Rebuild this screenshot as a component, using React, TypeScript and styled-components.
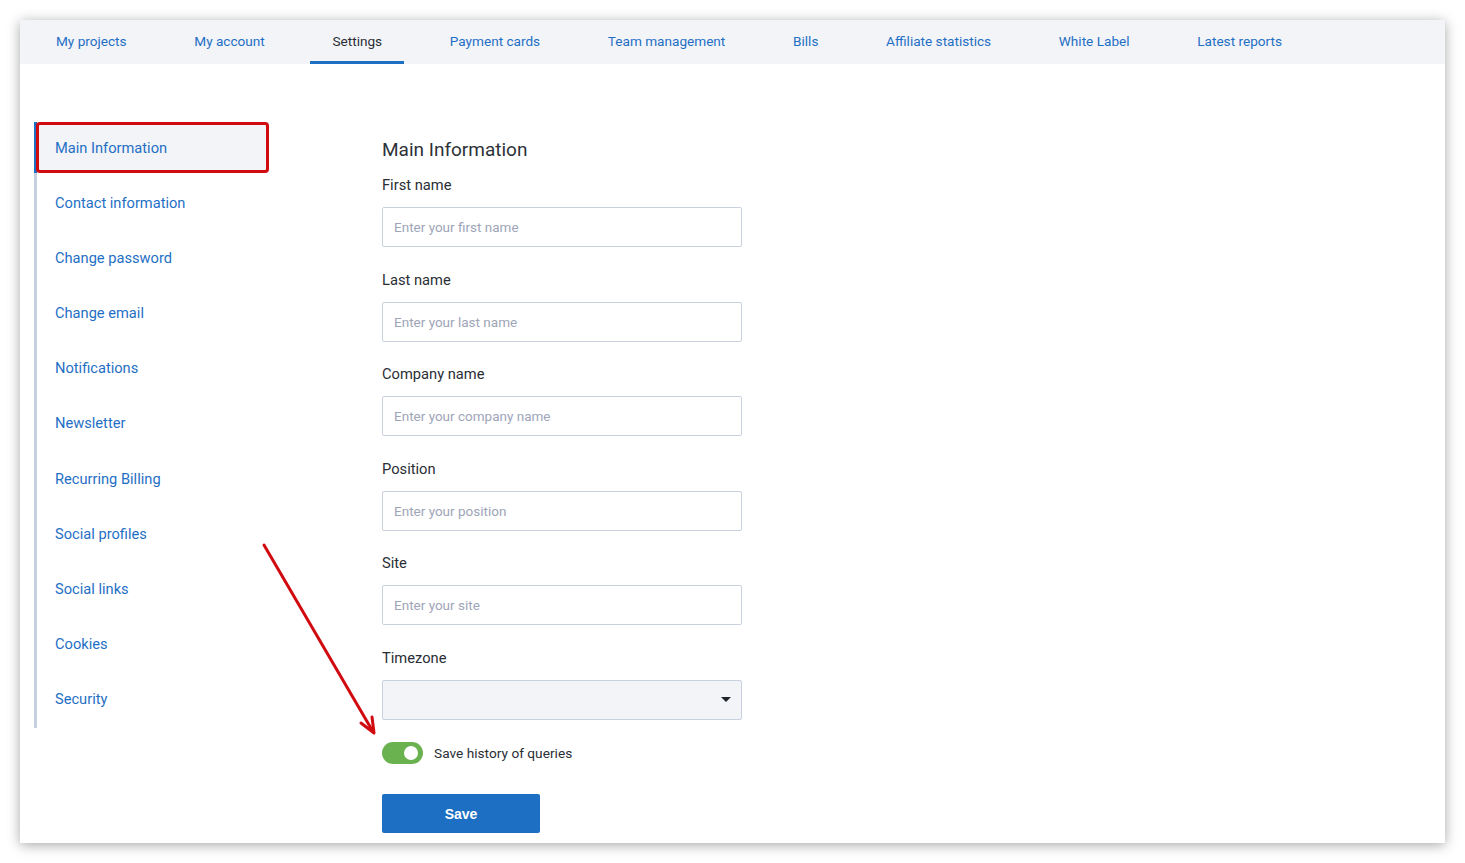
import React, { useState } from "react";
import styled, { createGlobalStyle } from "styled-components";

const GlobalStyle = createGlobalStyle`
  * { box-sizing: border-box; }
  body {
    margin: 0;
    background: #ffffff;
    font-family: Roboto, "Liberation Sans", Arial, sans-serif;
  }
`;

const Page = styled.div`
  padding: 20px;
  height: 863px;
`;

const Card = styled.div`
  position: relative;
  height: 823px;
  background: #ffffff;
  box-shadow: 0 2px 12px rgba(0, 0, 0, 0.35);
`;

const TabBar = styled.nav`
  display: flex;
  gap: 23.7px;
  height: 44px;
  padding-left: 14px;
  background: #f3f4f8;
`;

const Tab = styled.a<{ $active?: boolean }>`
  display: flex;
  align-items: center;
  padding: 1px 22px 0;
  font-size: 13.6px;
  color: ${(p) => (p.$active ? "#2a2e35" : "#1f6fc5")};
  border-bottom: 3px solid ${(p) => (p.$active ? "#1c6fc2" : "transparent")};
  cursor: pointer;
`;

const Content = styled.div`
  display: flex;
  padding-left: 14px;
`;

const SideMenu = styled.ul`
  list-style: none;
  margin: 58px 0 0;
  padding: 0 0 3px;
  width: 235px;
  border-left: 3px solid #c6d0de;
  display: flex;
  flex-direction: column;
  gap: 4.2px;
  align-self: flex-start;
`;

const SideItem = styled.li<{ $active?: boolean }>`
  position: relative;
  height: 51px;
  display: flex;
  align-items: center;
  padding-left: 18px;
  margin-left: -3px;
  border-left: 3px solid ${(p) => (p.$active ? "#1c6fc2" : "transparent")};
  background: ${(p) => (p.$active ? "#f3f4f8" : "transparent")};
  font-size: 14.65px;
  color: #1f6fc5;
  cursor: pointer;

  ${(p) =>
    p.$active &&
    `
    &::after {
      content: "";
      position: absolute;
      left: -1px;
      top: 0;
      right: 0;
      bottom: 0;
      border: 3px solid #d10a10;
      border-radius: 4px;
    }
  `}
`;

const Form = styled.form`
  width: 360px;
  margin: 74px 0 0 113px;
  display: flex;
  flex-direction: column;
`;

const Title = styled.h2`
  margin: 0 0 13px;
  font-size: 19px;
  line-height: 24px;
  font-weight: 400;
  color: #2d3138;
`;

const Field = styled.div`
  display: flex;
  flex-direction: column;
  margin-bottom: 22.5px;
`;

const Label = styled.label`
  font-size: 14.7px;
  line-height: 20px;
  color: #2a2e35;
  margin-bottom: 12px;
`;

const TextInput = styled.input`
  height: 40px;
  width: 100%;
  padding: 0 11px;
  border: 1px solid #c9d1de;
  border-radius: 2px;
  font-family: inherit;
  font-size: 13.5px;
  color: #2a2e35;
  background: #ffffff;
  outline: none;

  &::placeholder {
    color: #9ea5b8;
  }
`;

const SelectBox = styled.div`
  position: relative;
  height: 40px;
  border: 1px solid #c9d1de;
  border-radius: 2px;
  background: #f3f4f8;
`;

const Caret = styled.span`
  position: absolute;
  right: 10px;
  top: 16px;
  width: 0;
  height: 0;
  border-left: 5px solid transparent;
  border-right: 5px solid transparent;
  border-top: 5px solid #1f232a;
`;

const ToggleRow = styled.div`
  display: flex;
  align-items: center;
  gap: 11px;
  height: 22px;
`;

const Toggle = styled.button<{ $on: boolean }>`
  position: relative;
  width: 41px;
  height: 22px;
  border: none;
  padding: 0;
  border-radius: 11px;
  background: ${(p) => (p.$on ? "#6ab150" : "#c6ccd6")};
  cursor: pointer;

  &::after {
    content: "";
    position: absolute;
    top: 4px;
    left: ${(p) => (p.$on ? "22px" : "5px")};
    width: 14px;
    height: 14px;
    border-radius: 50%;
    background: #ffffff;
  }
`;

const ToggleText = styled.span`
  font-size: 13.7px;
  color: #2a2e35;
`;

const SaveButton = styled.button`
  margin-top: 30px;
  width: 158px;
  height: 39px;
  border: none;
  border-radius: 2px;
  background: #1c6fc2;
  color: #ffffff;
  font-family: "Liberation Sans", Arial, sans-serif;
  font-weight: 700;
  font-size: 14px;
  cursor: pointer;
`;

const Pointer = styled.svg`
  position: absolute;
  left: 0;
  top: 0;
  pointer-events: none;
`;

const tabs = [
  "My projects",
  "My account",
  "Settings",
  "Payment cards",
  "Team management",
  "Bills",
  "Affiliate statistics",
  "White Label",
  "Latest reports",
];

const menu = [
  "Main Information",
  "Contact information",
  "Change password",
  "Change email",
  "Notifications",
  "Newsletter",
  "Recurring Billing",
  "Social profiles",
  "Social links",
  "Cookies",
  "Security",
];

const fields = [
  { label: "First name", placeholder: "Enter your first name" },
  { label: "Last name", placeholder: "Enter your last name" },
  { label: "Company name", placeholder: "Enter your company name" },
  { label: "Position", placeholder: "Enter your position" },
  { label: "Site", placeholder: "Enter your site" },
];

export default function App() {
  const [saveHistory, setSaveHistory] = useState(true);

  return (
    <Page>
      <GlobalStyle />
      <Card>
        <TabBar>
          {tabs.map((t) => (
            <Tab key={t} $active={t === "Settings"}>
              {t}
            </Tab>
          ))}
        </TabBar>
        <Content>
          <SideMenu>
            {menu.map((m, i) => (
              <SideItem key={m} $active={i === 0}>
                {m}
              </SideItem>
            ))}
          </SideMenu>
          <Form onSubmit={(e) => e.preventDefault()}>
            <Title>Main Information</Title>
            {fields.map((f) => (
              <Field key={f.label}>
                <Label>{f.label}</Label>
                <TextInput type="text" placeholder={f.placeholder} />
              </Field>
            ))}
            <Field>
              <Label>Timezone</Label>
              <SelectBox>
                <Caret />
              </SelectBox>
            </Field>
            <ToggleRow>
              <Toggle
                type="button"
                $on={saveHistory}
                onClick={() => setSaveHistory((v) => !v)}
              />
              <ToggleText>Save history of queries</ToggleText>
            </ToggleRow>
            <SaveButton type="submit">Save</SaveButton>
          </Form>
        </Content>
        {/* annotation arrow pointing at the history toggle */}
        <Pointer width="400" height="740" viewBox="0 0 400 740">
          <line
            x1="244"
            y1="525"
            x2="352"
            y2="710"
            stroke="#d10a10"
            strokeWidth="3"
            strokeLinecap="round"
          />
          <polyline
            points="341,703 354,713 352,697"
            fill="none"
            stroke="#d10a10"
            strokeWidth="3"
            strokeLinecap="round"
            strokeLinejoin="round"
          />
        </Pointer>
      </Card>
    </Page>
  );
}
